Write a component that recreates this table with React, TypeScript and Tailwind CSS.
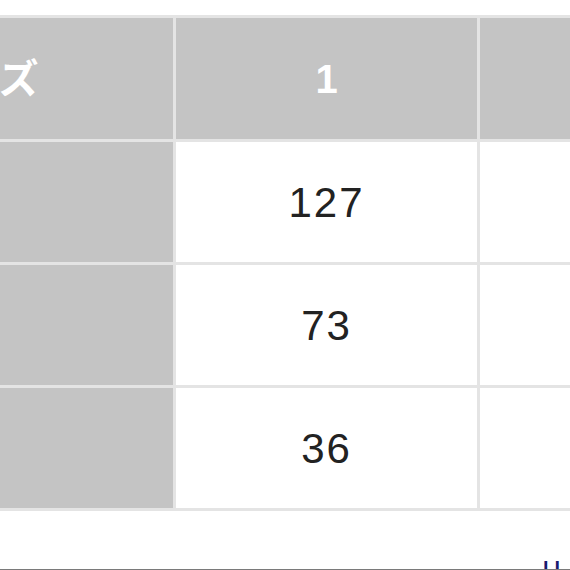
export default function App() {
  const rows = [
    ["", "127", ""],
    ["", "73", ""],
    ["", "36", ""],
  ];

  return (
    <div
      className="w-[570px] h-[570px] overflow-hidden bg-white"
      style={{ fontFamily: '"Liberation Sans", "Noto Sans CJK JP", sans-serif' }}
    >
      <div className="pt-[15px] -ml-[214px] w-[1000px]">
        <div className="grid grid-cols-[384px_301px_300px] gap-[3px] bg-[#e4e4e4] p-[3px] w-fit">
          {/* Header */}
          <div className="h-[121px] bg-[#c4c4c4] flex items-center justify-center pr-[4px] text-white font-bold text-[40px]">
            サイズ
          </div>
          <div className="h-[121px] bg-[#c4c4c4] flex items-center justify-center text-white font-bold text-[40px]">
            1
          </div>
          <div className="h-[121px] bg-[#c4c4c4] flex items-center justify-center text-white font-bold text-[40px]">
            2
          </div>

          {rows.map((r, i) => (
            <>
              <div key={`a${i}`} className="h-[120px] bg-[#c4c4c4]" />
              <div
                key={`b${i}`}
                className="h-[120px] bg-white flex items-center justify-center text-[#222] text-[42px] tracking-[2px]"
              >
                {r[1]}
              </div>
              <div key={`c${i}`} className="h-[120px] bg-white" />
            </>
          ))}
        </div>
      </div>

      {/* bottom link strip, mostly cut off */}
      <div className="mt-[48px] h-[10px] overflow-hidden flex justify-end pr-[4px]">
        <span className="text-[#1a1a6e] text-[20px] leading-[20px] font-bold tracking-[6px]">ll</span>
      </div>
      <div className="h-[2px] bg-[#7a7a7a]" />
    </div>
  );
}
